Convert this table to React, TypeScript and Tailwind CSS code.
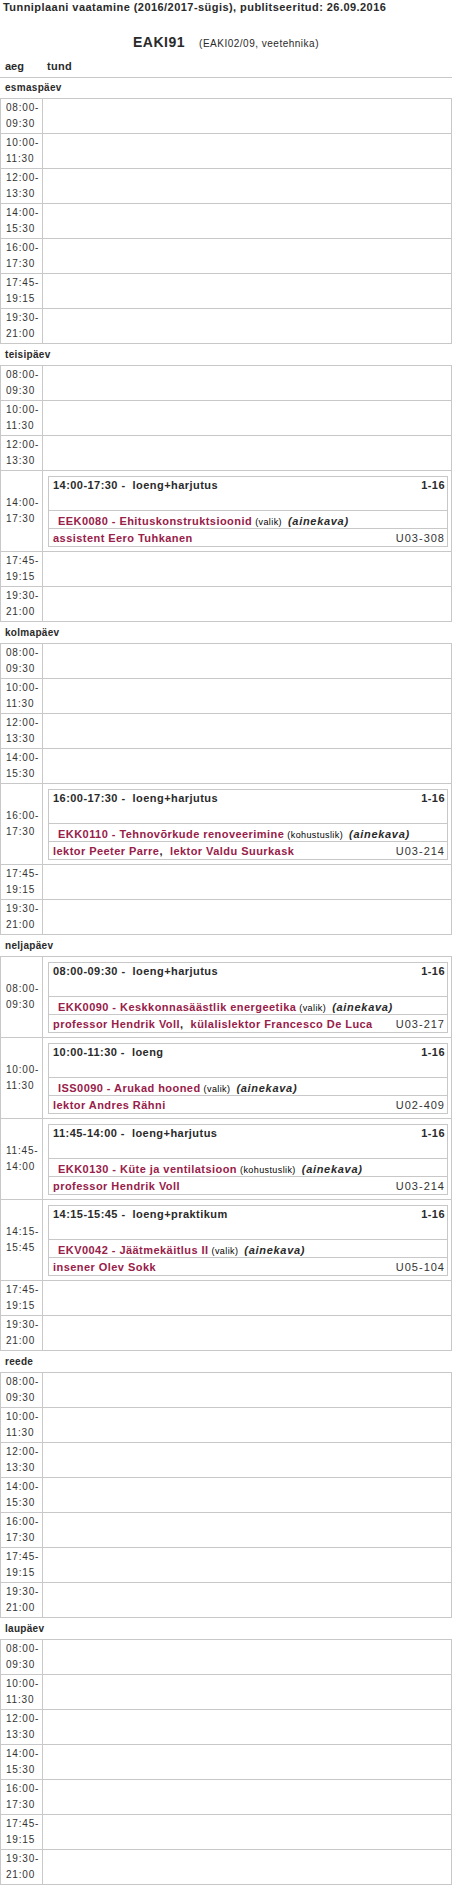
import React from 'react';

type Lesson = {
  time: string;
  type: string;
  weeks: string;
  code: string;
  name: string;
  kind: string;
  teachers: string[];
  room: string;
};

type Slot = {
  start: string;
  end: string;
  lesson?: Lesson;
};

const allSlots: Slot[] = [
  { start: '08:00', end: '09:30' },
  { start: '10:00', end: '11:30' },
  { start: '12:00', end: '13:30' },
  { start: '14:00', end: '15:30' },
  { start: '16:00', end: '17:30' },
  { start: '17:45', end: '19:15' },
  { start: '19:30', end: '21:00' },
];

const days: { name: string; slots: Slot[] }[] = [
  { name: 'esmaspäev', slots: allSlots },
  {
    name: 'teisipäev',
    slots: [
      allSlots[0],
      allSlots[1],
      allSlots[2],
      {
        start: '14:00',
        end: '17:30',
        lesson: {
          time: '14:00-17:30',
          type: 'loeng+harjutus',
          weeks: '1-16',
          code: 'EEK0080',
          name: 'Ehituskonstruktsioonid',
          kind: 'valik',
          teachers: ['assistent Eero Tuhkanen'],
          room: 'U03-308',
        },
      },
      allSlots[5],
      allSlots[6],
    ],
  },
  {
    name: 'kolmapäev',
    slots: [
      allSlots[0],
      allSlots[1],
      allSlots[2],
      allSlots[3],
      {
        start: '16:00',
        end: '17:30',
        lesson: {
          time: '16:00-17:30',
          type: 'loeng+harjutus',
          weeks: '1-16',
          code: 'EKK0110',
          name: 'Tehnovõrkude renoveerimine',
          kind: 'kohustuslik',
          teachers: ['lektor Peeter Parre', 'lektor Valdu Suurkask'],
          room: 'U03-214',
        },
      },
      allSlots[5],
      allSlots[6],
    ],
  },
  {
    name: 'neljapäev',
    slots: [
      {
        start: '08:00',
        end: '09:30',
        lesson: {
          time: '08:00-09:30',
          type: 'loeng+harjutus',
          weeks: '1-16',
          code: 'EKK0090',
          name: 'Keskkonnasäästlik energeetika',
          kind: 'valik',
          teachers: ['professor Hendrik Voll', 'külalislektor Francesco De Luca'],
          room: 'U03-217',
        },
      },
      {
        start: '10:00',
        end: '11:30',
        lesson: {
          time: '10:00-11:30',
          type: 'loeng',
          weeks: '1-16',
          code: 'ISS0090',
          name: 'Arukad hooned',
          kind: 'valik',
          teachers: ['lektor Andres Rähni'],
          room: 'U02-409',
        },
      },
      {
        start: '11:45',
        end: '14:00',
        lesson: {
          time: '11:45-14:00',
          type: 'loeng+harjutus',
          weeks: '1-16',
          code: 'EKK0130',
          name: 'Küte ja ventilatsioon',
          kind: 'kohustuslik',
          teachers: ['professor Hendrik Voll'],
          room: 'U03-214',
        },
      },
      {
        start: '14:15',
        end: '15:45',
        lesson: {
          time: '14:15-15:45',
          type: 'loeng+praktikum',
          weeks: '1-16',
          code: 'EKV0042',
          name: 'Jäätmekäitlus II',
          kind: 'valik',
          teachers: ['insener Olev Sokk'],
          room: 'U05-104',
        },
      },
      allSlots[5],
      allSlots[6],
    ],
  },
  { name: 'reede', slots: allSlots },
  { name: 'laupäev', slots: allSlots },
];

const font = { fontFamily: '"Liberation Sans", Arial, sans-serif' };

function LessonBox({ lesson }: { lesson: Lesson }) {
  return (
    <div className="mt-[5px] mb-[4px] ml-[5px] mr-[3px] border border-[#c8c8c8]">
      {/* time, type, weeks */}
      <div className="flex h-[33px] justify-between pl-[4px] pr-[2px] text-[11px] font-bold leading-[16px] tracking-[0.45px] text-[#2a2a2a]">
        <span>
          {lesson.time} -{'\u00a0'} {lesson.type}
        </span>
        <span>{lesson.weeks}</span>
      </div>

      {/* course */}
      <div className="h-[18px] border-t border-[#c8c8c8] pl-[9px] leading-[18px] whitespace-nowrap">
        <span className="text-[11px] font-bold tracking-[0.45px] text-[#982049]">
          {lesson.code} - {lesson.name}
        </span>
        <span className="ml-[3px] text-[9px] tracking-[0.4px] text-black">({lesson.kind})</span>
        <span className="ml-[6px] text-[11px] font-bold italic tracking-[0.7px] text-[#2a2a2a]">(ainekava)</span>
      </div>

      {/* teachers and room */}
      <div className="flex h-[18px] justify-between border-t border-[#c8c8c8] pl-[4px] pr-[2px] leading-[18px] whitespace-nowrap">
        <span className="text-[11px] font-bold tracking-[0.45px] text-[#982049]">
          {lesson.teachers.map((t, i) => (
            <React.Fragment key={t}>
              {i > 0 && <span className="text-[#2a2a2a]">,{'\u00a0'} </span>}
              {t}
            </React.Fragment>
          ))}
        </span>
        <span className="text-[11px] tracking-[1px] text-[#333]">{lesson.room}</span>
      </div>
    </div>
  );
}

function DayTable({ name, slots, first }: { name: string; slots: Slot[]; first: boolean }) {
  return (
    <section>
      <h3
        className={`${first ? 'pt-[2px]' : 'pt-[3px]'} pb-[2px] pl-[5px] text-[10px] font-bold leading-[16px] tracking-[0.3px] text-[#2a2a2a]`}
      >
        {name}
      </h3>
      <div className="border border-[#c8c8c8]">
        {slots.map((slot, i) => (
          <div key={i} className={`flex ${i > 0 ? 'border-t border-[#c8c8c8]' : ''}`}>
            <div className="flex w-[42px] shrink-0 items-center border-r border-[#c8c8c8] py-[1px] pl-[5px] text-[10px] leading-[16px] tracking-[0.8px] text-[#333]">
              <span>
                {slot.start}-
                <br />
                {slot.end}
              </span>
            </div>
            <div className="min-w-0 flex-1">{slot.lesson && <LessonBox lesson={slot.lesson} />}</div>
          </div>
        ))}
      </div>
    </section>
  );
}

export default function App() {
  return (
    <div className="w-[452px] bg-white text-[#2a2a2a]" style={font}>
      <div className="h-[14px] pl-[3px] text-[11px] font-bold leading-[14px] tracking-[0.45px] whitespace-nowrap">
        Tunniplaani vaatamine (2016/2017-sügis), publitseeritud: 26.09.2016
      </div>

      <div className="mt-[19px] flex h-[18px] items-baseline justify-center leading-[18px]">
        <span className="text-[14px] font-bold tracking-[0.5px]">EAKI91</span>
        <span className="ml-[14px] text-[10px] tracking-[0.5px]">(EAKI02/09, veetehnika)</span>
      </div>

      <div className="mt-[8px] flex h-[14px] text-[11px] font-bold leading-[14px]">
        <span className="w-[42px] pl-[5px]">aeg</span>
        <span className="pl-[5px] tracking-[0.3px]">tund</span>
      </div>

      <div className="mt-[4px] h-px bg-[#c8c8c8]" />

      {days.map((d, i) => (
        <DayTable key={d.name} name={d.name} slots={d.slots} first={i === 0} />
      ))}
    </div>
  );
}
